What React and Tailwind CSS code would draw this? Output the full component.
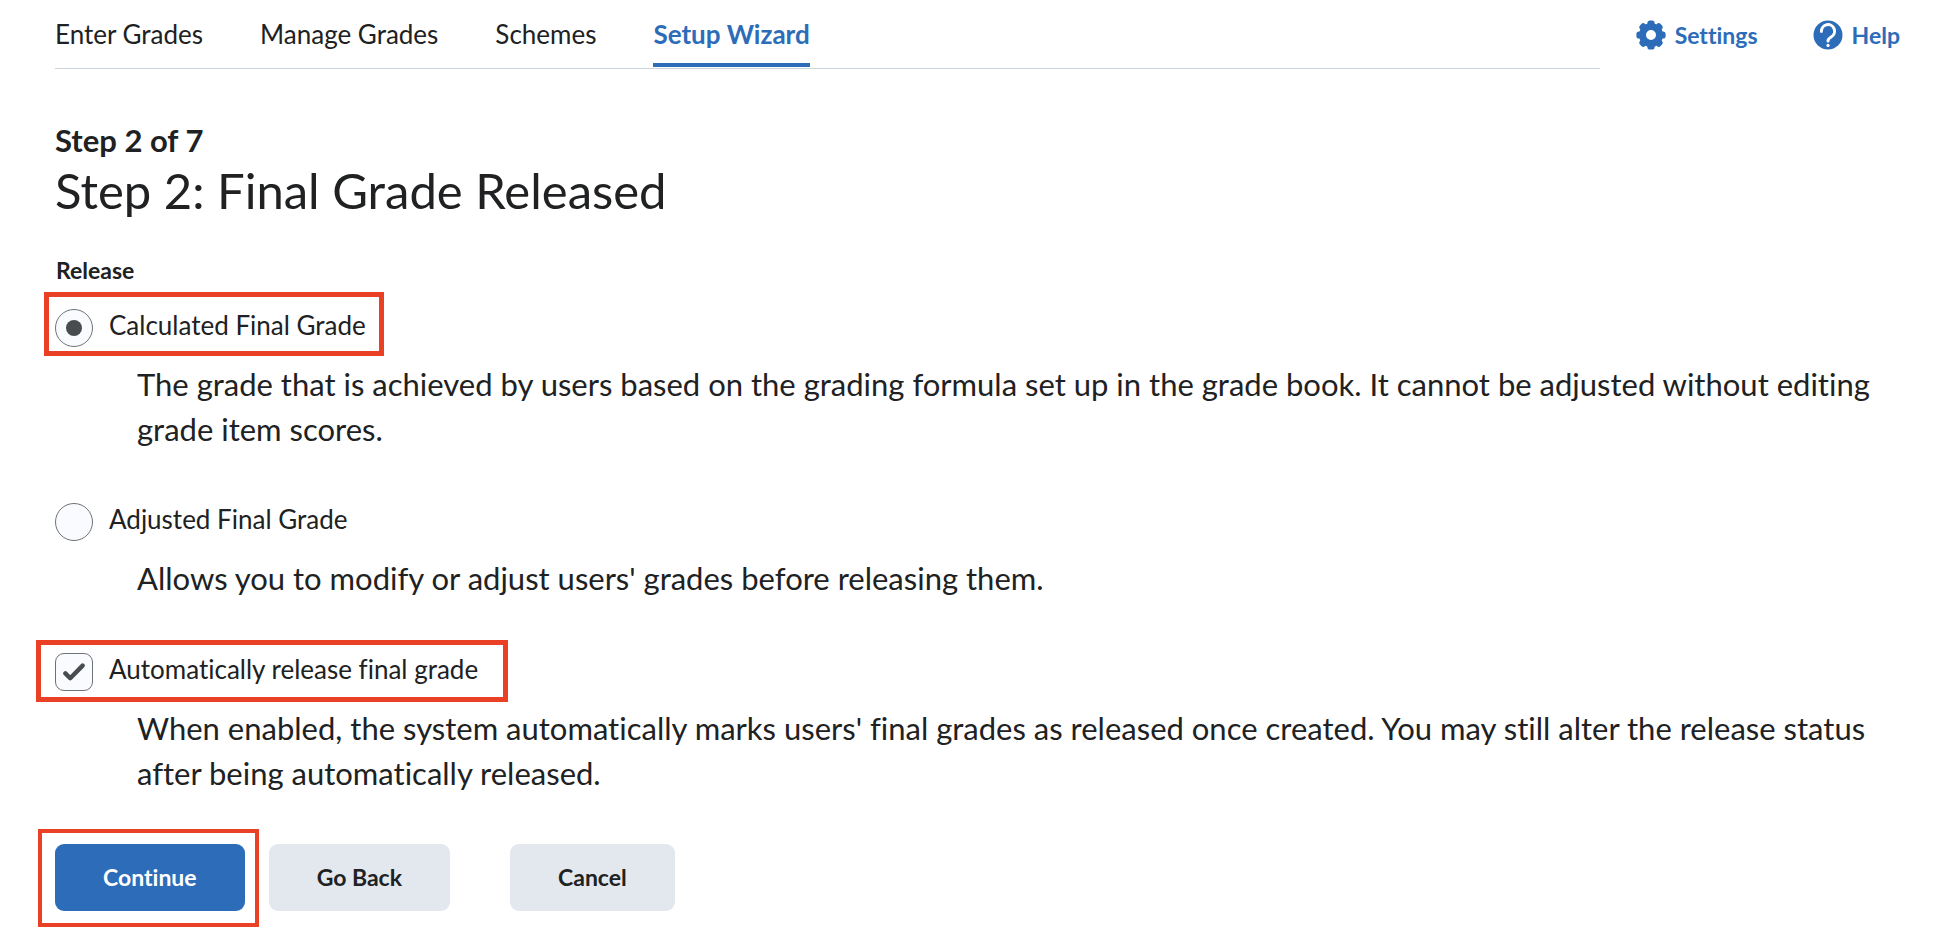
import { useState } from "react";

const tabs = ["Enter Grades", "Manage Grades", "Schemes", "Setup Wizard"];

const GearIcon = () => (
  <svg viewBox="0 0 30 30" className="w-[30px] h-[30px]" fill="none" aria-hidden="true">
    <circle cx="15" cy="15" r="8.5" stroke="#2d6cb8" strokeWidth="7" />
    {[0, 45, 90, 135, 180, 225, 270, 315].map((deg) => (
      <rect
        key={deg}
        x="11.4"
        y="0.4"
        width="7.2"
        height="7"
        rx="2.6"
        fill="#2d6cb8"
        transform={`rotate(${deg} 15 15)`}
      />
    ))}
  </svg>
);

const HelpIcon = () => (
  <svg viewBox="0 0 30 30" className="w-[30px] h-[30px]" fill="none" aria-hidden="true">
    <circle cx="15" cy="15" r="14.5" fill="#2d6cb8" />
    <path
      d="M8.4 11.4a6.6 6.6 0 1 1 9.8 5.6c-2.2 1.2-3.2 1.8-3.2 4"
      stroke="#fff"
      strokeWidth="3"
      strokeLinecap="round"
    />
    <circle cx="15" cy="25.4" r="1.6" fill="#fff" />
  </svg>
);

const Header = () => {
  return (
    <header className="flex items-start justify-between pt-[18px]">
      <nav className="flex-1 flex gap-[57px] pb-px border-b border-[#cdd5dc]">
        {tabs.map((tab) => (
          <a
            key={tab}
            href="#"
            className={
              tab === "Setup Wizard"
                ? "pb-[13px] border-b-4 border-[#2d6cb8] text-[26px] leading-8 font-bold text-[#2d6cb8]"
                : "pb-[13px] border-b-4 border-transparent text-[26px] leading-8"
            }
          >
            {tab}
          </a>
        ))}
      </nav>

      <div className="flex gap-[55px] pl-9 text-[23px] leading-8 font-bold text-[#2d6cb8]">
        <a href="#" className="flex items-center gap-[9px] pt-px">
          <GearIcon />
          Settings
        </a>
        <a href="#" className="flex items-center gap-[9px] pt-px">
          <HelpIcon />
          Help
        </a>
      </div>
    </header>
  );
};

const ReleaseOption = ({ id, label, checked, onChange, highlight, children }) => {
  return (
    <div>
      <div className="relative w-fit flex items-start gap-4">
        {highlight && (
          <span className="absolute -left-[11px] -right-[18px] -top-[17px] -bottom-[9px] border-5 border-[#ea4025] pointer-events-none" />
        )}
        <span className="relative grid place-items-center">
          <input
            type="radio"
            id={id}
            name="release"
            checked={checked}
            onChange={onChange}
            className="appearance-none w-[38px] h-[38px] rounded-full border border-[#6e7376] bg-[#f9fbff]"
          />
          {checked && (
            <span className="absolute w-4 h-4 rounded-full bg-[#494c4e] pointer-events-none" />
          )}
        </span>
        <label htmlFor={id} className="text-[26px] leading-8">
          {label}
        </label>
      </div>
      <p className="mt-[15px] pl-[82px] text-[31px] leading-[45px]">{children}</p>
    </div>
  );
};

const App = () => {
  const [release, setRelease] = useState("calculated");
  const [autoRelease, setAutoRelease] = useState(true);

  return (
    <div className="bg-white pl-[55px] pr-[42px] pb-9 font-['Lato',sans-serif] text-[#202122] [font-variant-ligatures:none]">
      <Header />

      <main>
        <p className="mt-[53px] text-[31px] leading-9 font-bold">Step 2 of 7</p>
        <h1 className="mt-1 text-[49px] leading-[56px]">Step 2: Final Grade Released</h1>

        <fieldset className="mt-[38px]">
          <legend className="pl-px text-[23px] leading-7 font-bold">Release</legend>

          <div className="mt-[25px] flex flex-col gap-[51px]">
            <ReleaseOption
              id="calculated"
              label="Calculated Final Grade"
              checked={release === "calculated"}
              onChange={() => setRelease("calculated")}
              highlight
            >
              The grade that is achieved by users based on the grading formula set up in the
              grade book. It cannot be adjusted without editing grade item scores.
            </ReleaseOption>
            <ReleaseOption
              id="adjusted"
              label="Adjusted Final Grade"
              checked={release === "adjusted"}
              onChange={() => setRelease("adjusted")}
            >
              Allows you to modify or adjust users' grades before releasing them.
            </ReleaseOption>
          </div>
        </fieldset>

        {/* auto release */}
        <div className="relative mt-[52px] w-fit flex items-start gap-4">
          <span className="absolute -left-[19px] -right-[30px] -top-[13px] -bottom-[11px] border-5 border-[#ea4025] pointer-events-none" />
          <span className="relative grid place-items-center">
            <input
              type="checkbox"
              id="auto"
              checked={autoRelease}
              onChange={(e) => setAutoRelease(e.target.checked)}
              className="appearance-none w-[38px] h-[38px] rounded-[9px] border border-[#6e7376] bg-[#f9fbff]"
            />
            {autoRelease && (
              <svg
                viewBox="0 0 22 18"
                className="absolute w-[22px] h-[18px] pointer-events-none"
                fill="none"
                aria-hidden="true"
              >
                <path
                  d="M2.4 10.4l4.8 4.8L19.6 2.6"
                  stroke="#494c4e"
                  strokeWidth="4.4"
                  strokeLinecap="round"
                  strokeLinejoin="round"
                />
              </svg>
            )}
          </span>
          <label htmlFor="auto" className="text-[26px] leading-8">
            Automatically release final grade
          </label>
        </div>
        <p className="mt-[15px] pl-[82px] text-[31px] leading-[45px]">
          When enabled, the system automatically marks users' final grades as released once
          created. You may still alter the release status after being automatically released.
        </p>

        {/* buttons */}
        <div className="mt-12 flex text-[23px] leading-[67px] font-bold">
          <div className="relative">
            <button className="px-12 rounded-[9px] bg-[#2d6cb8] text-white">Continue</button>
            <span className="absolute -left-[17px] -right-[14px] -top-[15px] -bottom-4 border-4 border-[#ea4025] pointer-events-none" />
          </div>
          <button className="ml-6 px-12 rounded-[9px] bg-[#e3e8ef]">Go Back</button>
          <button className="ml-15 px-12 rounded-[9px] bg-[#e3e8ef]">Cancel</button>
        </div>
      </main>
    </div>
  );
};

export default App;
